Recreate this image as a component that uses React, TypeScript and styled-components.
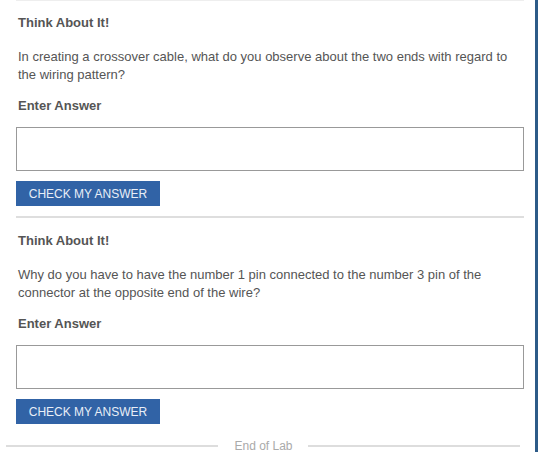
import React from "react";
import styled, { createGlobalStyle } from "styled-components";

const Global = createGlobalStyle`
  html, body { margin: 0; padding: 0; background: #fff; }
  body { font-family: "Liberation Sans", Arial, sans-serif; }
`;

const Page = styled.div`
  display: flex;
  width: 538px;
  height: 475px;
  overflow: hidden;
`;

const Main = styled.div`
  flex: 1;
  display: flex;
  flex-direction: column;
`;

const Column = styled.div`
  display: flex;
  flex-direction: column;
  margin: 0 11px 0 16px;
`;

const SideBar = styled.div`
  width: 3px;
  height: 452px;
  background: #2d5b88;
`;

const Rule = styled.div<{ $thick?: boolean }>`
  height: ${(p) => (p.$thick ? 2 : 1)}px;
  margin-bottom: ${(p) => (p.$thick ? 1 : 0)}px;
  background: ${(p) => (p.$thick ? "#dedede" : "#eeeeee")};
`;

const Section = styled.section`
  display: flex;
  flex-direction: column;
  padding: 14px 0 10px;
`;

const Heading = styled.h3`
  margin: 0 0 0 2px;
  font-size: 13px;
  line-height: 16px;
  font-weight: bold;
  color: #555;
`;

const Prompt = styled.p`
  margin: 17px 0 0 2px;
  font-size: 13px;
  line-height: 18px;
  color: #555;
`;

const Label = styled.label`
  margin: 14px 0 0 2px;
  font-size: 13px;
  line-height: 16px;
  font-weight: bold;
  color: #555;
`;

const Answer = styled.textarea`
  margin-top: 13px;
  box-sizing: border-box;
  width: 100%;
  height: 44px;
  border: 1px solid #999;
  resize: none;
  font-family: inherit;
  font-size: 13px;
  outline: none;
`;

const CheckButton = styled.button`
  margin-top: 10px;
  align-self: flex-start;
  width: 144px;
  height: 25px;
  padding: 0;
  border: none;
  background: #3163a6;
  color: #e8eef7;
  font-family: inherit;
  font-size: 12px;
  text-transform: uppercase;
  cursor: pointer;
`;

const EndRow = styled.div`
  display: flex;
  align-items: center;
  margin: 5px 0 0 6px;
  width: 514px;
`;

const EndLine = styled.div`
  flex: 1;
  height: 2px;
  background: #dddddd;
`;

const EndText = styled.span`
  padding: 0 15px 0 16px;
  font-size: 12px;
  color: #aaa;
`;

const questions = [
  "In creating a crossover cable, what do you observe about the two ends with regard to the wiring pattern?",
  "Why do you have to have the number 1 pin connected to the number 3 pin of the connector at the opposite end of the wire?",
];

export default function App() {
  return (
    <>
      <Global />
      <Page>
        <Main>
          <Column>
            {questions.map((q, i) => (
              <React.Fragment key={i}>
                <Rule $thick={i > 0} />
                <Section>
                  <Heading>Think About It!</Heading>
                  <Prompt>{q}</Prompt>
                  <Label>Enter Answer</Label>
                  <Answer />
                  <CheckButton>Check my answer</CheckButton>
                </Section>
              </React.Fragment>
            ))}
          </Column>
          <EndRow>
            <EndLine />
            <EndText>End of Lab</EndText>
            <EndLine />
          </EndRow>
        </Main>
        <SideBar />
      </Page>
    </>
  );
}
